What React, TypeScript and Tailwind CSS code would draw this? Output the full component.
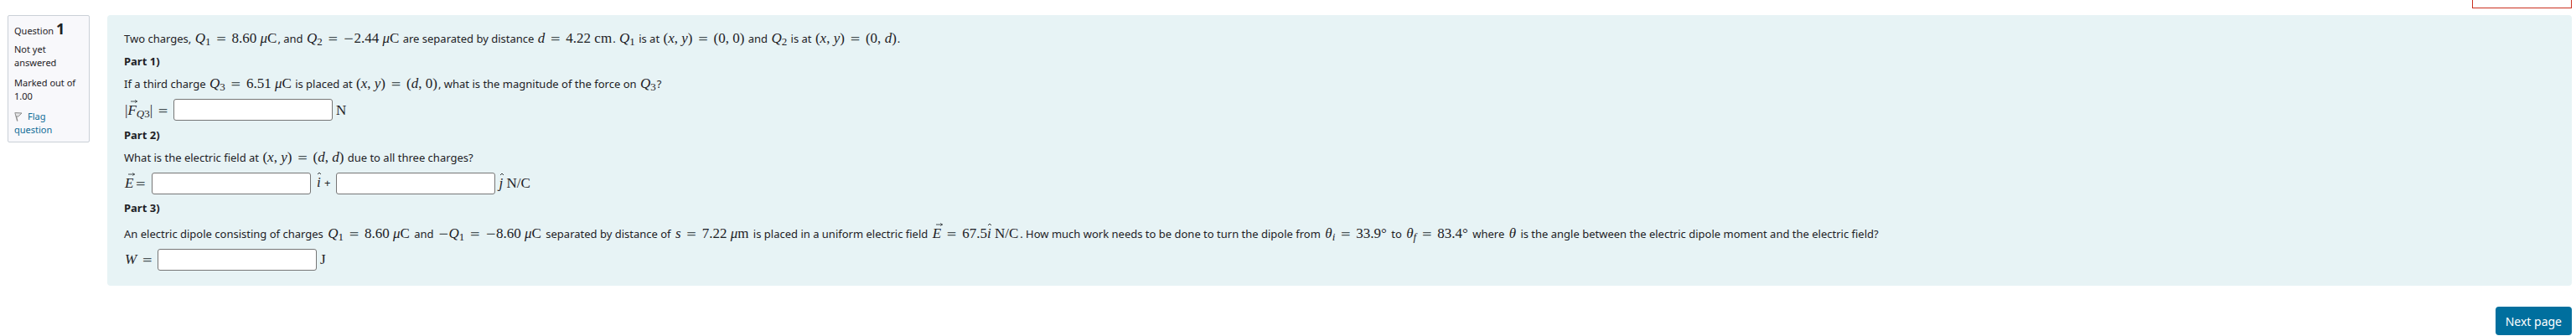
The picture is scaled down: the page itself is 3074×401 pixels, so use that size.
import type { ReactNode } from 'react'

interface ChildrenProps {
  children: ReactNode
}

// Upright math: numbers and units
function M({ children }: ChildrenProps) {
  return <span className="mx-px font-['Liberation_Serif',serif] text-[17px] leading-none whitespace-nowrap">{children}</span>
}

// Math variable
function V({ children }: ChildrenProps) {
  return <i className="italic">{children}</i>
}

function Sub({ children }: ChildrenProps) {
  return <sub className="text-[13px]">{children}</sub>
}

function Eq() {
  return <span className="mx-0.5 font-['DejaVu_Serif',serif] text-[15px] leading-none text-[#4a5558]">=</span>
}

function Minus() {
  return <span className="font-['DejaVu_Serif',serif] text-[15px] leading-none text-[#4a5558]">−</span>
}

function Vec({ children }: ChildrenProps) {
  return (
    <span className="relative inline-block leading-none">
      <V>{children}</V>
      <svg className="absolute -top-1 left-1 h-1 w-2" viewBox="0 0 8 4" fill="none" stroke="currentColor" strokeWidth="0.8">
        <path d="M0 2H7.5M5.5 0.3Q6 1.6 7.6 2Q6 2.4 5.5 3.7" />
      </svg>
    </span>
  )
}

function Hat({ children }: ChildrenProps) {
  return (
    <span className="relative inline-block leading-none">
      <V>{children}</V>
      <svg className="absolute -top-1 left-0 h-1 w-1.5" viewBox="0 0 6 4" fill="none" stroke="currentColor" strokeWidth="0.9">
        <path d="M1 3L3 1L5 3" />
      </svg>
    </span>
  )
}

function Charge({ n }: { n: number }) {
  return (
    <>
      <V>Q</V>
      <Sub>{n}</Sub>
    </>
  )
}

function Answer({ label }: { label: string }) {
  return (
    <input
      type="text"
      aria-label={label}
      className="h-[26px] w-[190px] rounded-[3px] border border-[#767676] bg-white px-1 text-[15px]"
    />
  )
}

function QuestionInfo() {
  return (
    <aside className="w-[98px] shrink-0 self-start rounded-[2px] border border-[#cad0d7] bg-[#f8f8fb] px-[7px] py-1.5 text-[11px] leading-4">
      <h3 className="leading-6">
        Question <span className="text-[18px] leading-none font-bold">1</span>
      </h3>
      <div className="mt-0.5">Not yet answered</div>
      <div className="mt-2">Marked out of 1.00</div>
      <div className="mt-2">
        <a href="#flag" className="text-[#0f6c97]">
          <svg className="mr-1.5 inline-block h-3 w-2.5 align-[-2px]" viewBox="0 0 10 12" fill="none" stroke="#8a8a8a">
            <path d="M1 1.2L3.8 11.5" strokeWidth="1.4" />
            <path d="M1.3 1.6L9 2L4.6 6.2L2.4 5.6" fill="#e4e4e6" />
          </svg>
          Flag question
        </a>
      </div>
    </aside>
  )
}

export default function App() {
  return (
    <div className="bg-white font-['Noto_Sans',sans-serif] text-[#1d2125]">
      <div className="flex h-[18px] items-start justify-end pr-[5px]">
        <div className="h-2.5 w-[119px] border border-t-0 border-[#ca3120]" />
      </div>

      <div className="flex pr-[5px] pl-[9px]">
        <QuestionInfo />

        <main className="ml-[21px] flex-1 rounded-[4px] bg-[#e7f3f5] px-5 pt-[15px] pb-[18px] text-[13px] leading-[27px]">
          <p>
            Two charges, <M><Charge n={1} /> <Eq /> 8.60 <V>μ</V>C</M>, and{' '}
            <M><Charge n={2} /> <Eq /> <Minus />2.44 <V>μ</V>C</M> are separated by distance{' '}
            <M><V>d</V> <Eq /> 4.22 cm</M>. <M><Charge n={1} /></M> is at{' '}
            <M>(<V>x</V>, <V>y</V>) <Eq /> (0, 0)</M> and <M><Charge n={2} /></M> is at{' '}
            <M>(<V>x</V>, <V>y</V>) <Eq /> (0, <V>d</V>)</M>.
          </p>
          <p className="font-bold">Part 1)</p>
          <p>
            If a third charge <M><Charge n={3} /> <Eq /> 6.51 <V>μ</V>C</M> is placed at{' '}
            <M>(<V>x</V>, <V>y</V>) <Eq /> (<V>d</V>, 0)</M>, what is the magnitude of the force on <M><Charge n={3} /></M>?
          </p>
          <div className="flex h-[34px] items-center gap-[3px]">
            <M>|<Vec>F</Vec><Sub><V>Q</V>3</Sub>| <Eq /></M>
            <Answer label="Magnitude of the force on Q3 in newtons" />
            <M>N</M>
          </div>
          <p className="font-bold">Part 2)</p>
          <p>
            What is the electric field at <M>(<V>x</V>, <V>y</V>) <Eq /> (<V>d</V>, <V>d</V>)</M> due to all three charges?
          </p>
          <div className="flex h-[33px] items-center gap-1">
            <M><Vec>E</Vec><Eq /></M>
            <Answer label="i component of the electric field" />
            <span className="mx-0.5"><M><Hat>i</Hat></M> +</span>
            <Answer label="j component of the electric field" />
            <M><Hat>j</Hat> N/C</M>
          </div>
          <p className="font-bold">Part 3)</p>
          <p className="leading-[34px] [&>span]:mx-0.5">
            An electric dipole consisting of charges <M><Charge n={1} /> <Eq /> 8.60 <V>μ</V>C</M> and{' '}
            <M><Minus /><Charge n={1} /> <Eq /> <Minus />8.60 <V>μ</V>C</M> separated by distance of{' '}
            <M><V>s</V> <Eq /> 7.22 <V>μ</V>m</M> is placed in a uniform electric field{' '}
            <M><Vec>E</Vec> <Eq /> 67.5<Hat>i</Hat> N/C</M>. How much work needs to be done to turn the dipole from{' '}
            <M><V>θ</V><Sub><V>i</V></Sub> <Eq /> 33.9°</M> to <M><V>θ</V><Sub><V>f</V></Sub> <Eq /> 83.4°</M> where{' '}
            <M><V>θ</V></M> is the angle between the electric dipole moment and the electric field?
          </p>
          <div className="flex h-[27px] items-center gap-[3px]">
            <M><V>W</V> <Eq /></M>
            <Answer label="Work in joules" />
            <M>J</M>
          </div>
        </main>
      </div>

      <div className="mt-[25px] flex justify-end pr-[5px]">
        <button type="button" className="h-[34px] rounded-[4px] bg-[#006f9e] px-3 text-[14px] text-white">
          Next page
        </button>
      </div>
    </div>
  )
}
